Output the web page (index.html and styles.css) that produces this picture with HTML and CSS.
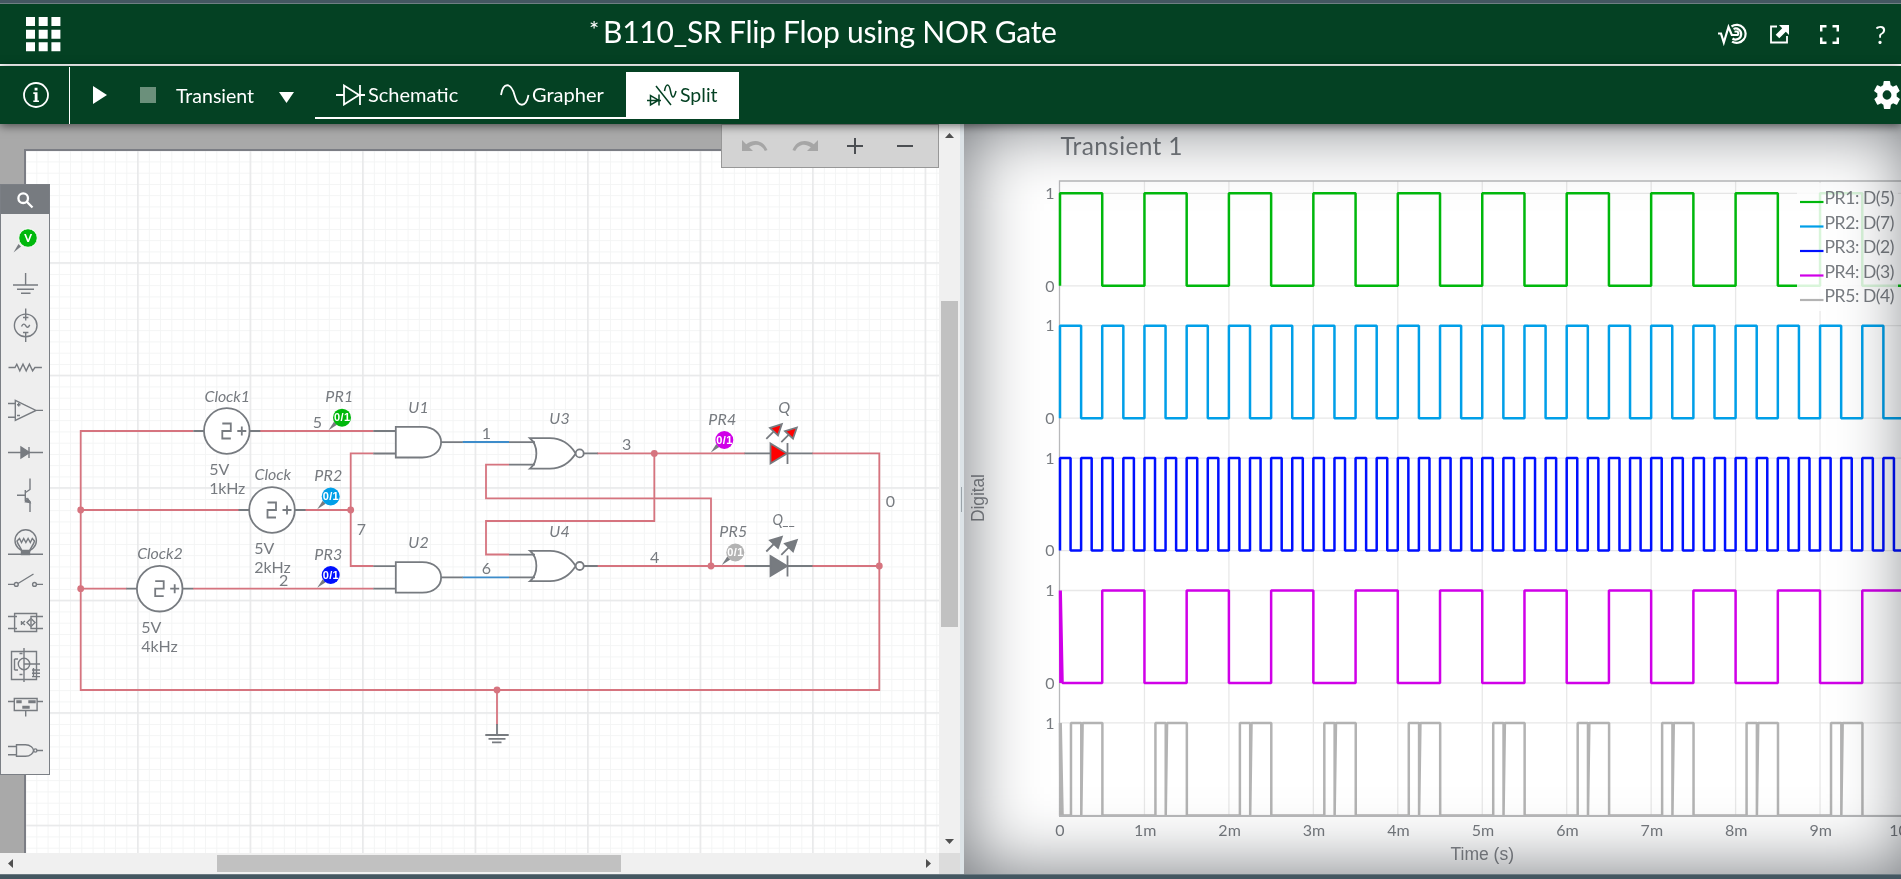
FILE: index.html
```html
<!DOCTYPE html>
<html lang="en">
<head>
<meta charset="utf-8">
<title>B110_SR Flip Flop using NOR Gate</title>
<link rel="stylesheet" href="styles.css">
</head>
<body>
<div class="app">
  <div class="strip top-strip"></div>
  <header class="header">
    <svg class="apps" width="35" height="35" viewBox="0 0 35 35"><path d="M0 0h9v9H0zM12.7 0h9v9h-9zM25.4 0h9v9h-9zM0 12.7h9v9H0zM12.7 12.7h9v9h-9zM25.4 12.7h9v9h-9zM0 25.2h9v9H0zM12.7 25.2h9v9h-9zM25.4 25.2h9v9h-9z"/></svg>
    <h1 class="title"><span class="dirty">*</span><span class="name">B110_SR Flip Flop using NOR Gate</span></h1>
    <nav class="actions">
      <svg width="30" height="24" viewBox="0 0 30 24" class="line"><path d="M1 11.500h3l2.800 9L11.500 5l3.300 8h5.700a2.200 2.200 0 0 0 0-3.500h-3"/><path d="M14.500 4.500A9 9 0 1 1 15 19.600"/><path d="M15.500 16.500a5.500 5.500 0 1 0 1-9.500"/></svg>
      <svg width="21" height="21" viewBox="0 0 21 21"><path d="M8 2.500H2v16h16V12" class="line thin"/><path d="M10 1h10v10l-3.200-3.200-6.500 6.500-3.600-3.600 6.500-6.500z"/></svg>
      <svg width="19" height="19" viewBox="0 0 19 19" class="bold"><path d="M1.200 6.500V1.200h5.300M12.500 1.200h5.300v5.300M17.800 12.500v5.300h-5.300M6.500 17.800H1.200v-5.300"/></svg>
      <span class="help">?</span>
    </nav>
  </header>
  <div class="toolbar">
    <div class="info"><svg width="28" height="28" viewBox="0 0 28 28"><circle cx="14" cy="14" r="12" class="line thin"/><path d="M12.600 6.800h2.900v2.700h-2.900zM11.300 11.300h4.200v8.200h1.500v1.600h-5.700v-1.600h1.400v-6.600h-1.400z"/></svg></div>
    <svg class="play" width="14" height="18" viewBox="0 0 14 18"><path d="M0 0l14 9-14 9z"/></svg>
    <span class="stop"></span>
    <span class="mode">Transient</span>
    <svg class="caret" width="15" height="11" viewBox="0 0 15 11"><path d="M0 0h15L7.500 11z"/></svg>
    <div class="tabs">
      <div class="tab schematic-tab"><svg width="30" height="22" viewBox="0 0 30 22" class="line thin"><path d="M0 11h8M8 1.500v19L23 11zM24 1v20M24 11h5"/></svg><span>Schematic</span></div>
      <div class="tab grapher-tab"><svg width="30" height="24" viewBox="0 0 30 24" class="line thin"><path d="M1 12C3-1 11-1 14.500 12S26 25 28.500 12"/></svg><span>Grapher</span></div>
      <div class="tab active"><svg width="31" height="24" viewBox="0 0 31 24" class="dark"><path d="M0 17.500h14M3.500 12.500v9.500l8-4.800zM12 11.500v11M9 3l15 19M17.500 8c1.500-8 4.500-8 6 0s3.500 8 5.500 0"/></svg><span>Split</span></div>
    </div>
    <svg class="gear" width="26" height="28" viewBox="2 2 20 20" preserveAspectRatio="none"><path d="M19.400 13a7.600 7.600 0 0 0 0-2l2.100-1.600a.5.5 0 0 0 .1-.7l-2-3.400a.5.500 0 0 0-.6-.2l-2.500 1a7.300 7.300 0 0 0-1.700-1l-.4-2.600a.5.5 0 0 0-.5-.5h-4a.5.5 0 0 0-.5.5l-.4 2.600a7.700 7.700 0 0 0-1.700 1l-2.500-1a.5.5 0 0 0-.6.200l-2 3.400a.5.5 0 0 0 .1.700L4.600 11a8 8 0 0 0 0 2l-2.100 1.600a.5.5 0 0 0-.1.700l2 3.400a.5.5 0 0 0 .6.200l2.500-1a7.300 7.300 0 0 0 1.700 1l.4 2.600a.5.5 0 0 0 .5.500h4a.5.5 0 0 0 .5-.5l.4-2.600a7.700 7.700 0 0 0 1.700-1l2.500 1a.5.5 0 0 0 .6-.2l2-3.400a.5.5 0 0 0-.1-.7zM12 15.400a3.400 3.400 0 1 1 0-6.800 3.400 3.400 0 0 1 0 6.800z" fill-rule="evenodd"/></svg>
  </div>

  <main class="workspace">
    <section class="editor">
      <div class="canvas">
        <svg class="sheet" width="939" height="729" viewBox="0 124 939 729">
          <defs>
            <pattern id="minor" x="25.100" y="150.200" width="11.250" height="11.250" patternUnits="userSpaceOnUse"><path d="M0 .5h11.250M.5 0v11.250" stroke="#f3f4f4" fill="none"/></pattern>
            <pattern id="major" x="24.600" y="149.700" width="112.500" height="112.500" patternUnits="userSpaceOnUse"><path d="M0 .75h112.500M.75 0v112.500" stroke="#e7e8e9" stroke-width="1.500" fill="none"/></pattern>
            <g id="and"><path d="M0-15.300h26.500C39-15.300 45.300-7.500 45.300 0S39 15.300 26.500 15.300H0z" class="body"/><path d="M-22.500-11.200H0M-22.500 11.300H0M45.300 0h21.700"/></g>
            <g id="nor"><path d="M0-15.200h20C31-15 40-9 45.700 0 40 9 31 15 20 15.200H0C8.500 8 8.500-8 0-15.200z" class="body"/><path d="M-21-11.300H5M-21 11.300H5M53.700 0h14"/><circle cx="49.700" cy="0" r="4" class="body"/></g>
            <g id="clock"><circle r="22.800" class="body"/><path d="M-33.500 0h10.700M22.800 0h10.700M-4.500-7.500H4V0h-8.500v7.500H4M10.500 0h9M15 -4.500v9"/></g>
            <g id="led"><path d="M-26 0H0M17 0h25M17-10.500v21"/><path d="M0-10L16.500 0 0 10z" class="fill"/><path d="M-4.200-14.500l8-8M10.800-11.200l8-8"/><path d="M11.300-29.200L-.5-25.600l8 7.600zM26.300-25.900L14.500-22.300l8 7.600z" class="fill"/></g>
            <g id="tail"><path d="M-13.500 12.500l5.500-8.500 3 3z"/></g>
          </defs>
          <rect x="0" y="124" width="939" height="729" fill="#a9a9a9"/>
          <rect x="25" y="150" width="930" height="720" fill="#fff"/>
          <rect x="25" y="150" width="930" height="720" fill="url(#minor)"/>
          <rect x="25" y="150" width="930" height="720" fill="url(#major)"/>
          <path d="M25 870V150h930" fill="none" stroke="#7b7d84" stroke-width="2"/>

          <g class="wire">
            <path d="M193.300 431H80.700V690H879.300V453.400H812M80.700 510H240M80.700 588.700h46M260 431h113.500M305 510h45.700M193 588.700h180.500M373.500 453.400h-22.800V566h22.800"/>
            <path d="M597 453.400h148M597 566h148M812 566h67.300M509 464.700h-23v33.700h225V566M654.300 453.400V521H486v33.500h23M497 690v35"/>
          </g>
          <path d="M462.500 442H509M462.500 577.400H509" class="bluewire"/>
          <g class="dot"><circle cx="80.700" cy="510" r="3.400"/><circle cx="80.700" cy="588.700" r="3.400"/><circle cx="350.700" cy="510" r="3.400"/><circle cx="654.300" cy="453.400" r="3.400"/><circle cx="711" cy="566" r="3.400"/><circle cx="879.300" cy="566" r="3.400"/><circle cx="497" cy="690" r="3.400"/></g>

          <g class="part">
            <use href="#clock" x="226.800" y="431"/><use href="#clock" x="272" y="510"/><use href="#clock" x="159.700" y="588.700"/>
            <use href="#and" x="395.800" y="442.200"/><use href="#and" x="395.800" y="577.400"/>
            <use href="#nor" x="530" y="453.400"/><use href="#nor" x="530" y="566"/>
            <use href="#led" x="770.500" y="453.400" class="lit"/><use href="#led" x="770.500" y="566" class="off"/>
            <path d="M497 724v11M485.300 735h23.400M488.500 738.800h17M492 742.400h9.500"/>
          </g>

          <g class="probe">
            <use href="#tail" x="342" y="417.700"/><circle cx="342" cy="417.700" r="9" fill="#00b80c"/>
            <use href="#tail" x="330.700" y="496.700"/><circle cx="330.700" cy="496.500" r="9" fill="#009fe8"/>
            <use href="#tail" x="330.700" y="575.200"/><circle cx="330.700" cy="575" r="9" fill="#0010ff"/>
            <use href="#tail" x="724.300" y="440"/><circle cx="724.300" cy="440" r="9" fill="#d000e8"/>
            <use href="#tail" x="735.300" y="552.500"/><circle cx="735.300" cy="552.500" r="9" fill="#b3b3b3"/>
            <text x="334" y="421.300" textLength="16">0/1</text><text x="322.700" y="500" textLength="16">0/1</text><text x="322.700" y="578.500" textLength="16">0/1</text><text x="716.300" y="443.500" textLength="16">0/1</text><text x="727.300" y="556" textLength="16">0/1</text>
          </g>

          <g class="label ref">
            <text x="204.500" y="402.300" textLength="45.500">Clock1</text><text x="254.500" y="480.300" textLength="36.500">Clock</text><text x="137.200" y="559.300" textLength="45.500">Clock2</text>
            <text x="325.200" y="402" textLength="28">PR1</text><text x="314.200" y="481" textLength="28">PR2</text><text x="314.200" y="560" textLength="28">PR3</text><text x="708.200" y="424.700" textLength="28">PR4</text><text x="719.200" y="537" textLength="28">PR5</text>
            <text x="408.200" y="413.300" textLength="20.500">U1</text><text x="408.200" y="548.300" textLength="20.500">U2</text><text x="549.200" y="424.300" textLength="20.500">U3</text><text x="549.200" y="537" textLength="20.500">U4</text>
            <text x="778.200" y="413.300">Q</text><text x="772.500" y="525.300" textLength="23" lengthAdjust="spacingAndGlyphs">Q__</text>
          </g>
          <g class="label">
            <text x="209.200" y="475">5V</text><text x="209.200" y="494.300" textLength="36">1kHz</text><text x="254.200" y="554">5V</text><text x="254.200" y="573.300" textLength="36.500">2kHz</text><text x="141.200" y="633">5V</text><text x="141.200" y="652.300" textLength="36.500">4kHz</text>
            <text x="312.700" y="428">5</text><text x="278.900" y="586">2</text><text x="356.700" y="534.700">7</text><text x="481.700" y="439.300">1</text><text x="481.700" y="574">6</text><text x="622" y="449.800">3</text><text x="650" y="563">4</text><text x="885.700" y="507">0</text>
          </g>
        </svg>
        <div class="history">
          <svg width="26" height="12" viewBox="0 0 26 12"><path d="M0 0v11h11L7.200 7.300C13 2.500 20 4.500 22.800 11l2.700-.9C22 .8 12.500-1.700 4.200 4.200z" fill="#a6a6a6"/></svg>
          <svg width="26" height="12" viewBox="0 0 26 12"><path d="M26 0v11H15l3.800-3.700C13 2.500 6 4.500 3.200 11L.5 10.100C4 .8 13.500-1.700 21.800 4.200z" fill="#a6a6a6"/></svg>
          <svg width="16" height="16" viewBox="0 0 16 16"><path d="M0 7h16v2H0zM7 0h2v16H7z" fill="#4b4e52"/></svg>
          <svg width="16" height="16" viewBox="0 0 16 16"><path d="M0 7h16v2H0z" fill="#4b4e52"/></svg>
        </div>
        <div class="toolbox">
          <div class="search"><svg width="17" height="17" viewBox="0 0 17 17"><circle cx="6.200" cy="6.200" r="4.800"/><path d="M9.800 9.800l5.700 5.700"/></svg></div>
          <svg class="palette" width="50" height="560" viewBox="0 214 50 560">
            <path d="M13.500 252.500l5-8.500 2.500 2.500z" class="solid tip"/><circle cx="28" cy="238" r="9.300" fill="#00b80c" stroke="#fff" stroke-width="1"/><text x="28" y="242">V</text>
            <path d="M25.600 273v12M13 285h25M17 289.300h17M21 293.300h9.500"/>
            <circle cx="25.700" cy="325.400" r="11.300"/><path d="M25.700 308.500v12M25.700 332.500v9.500M23 317.500h5.400M23 332.500h5.400M21.500 326.500c1.500-3 3-3 4.200-.8s2.700 2.200 4-.8"/>
            <path d="M8.500 367.500H15l1.800-3.300 3 6.600 3.200-6.600 3.200 6.600 3.200-6.600 3.200 6.600 2.300-3.300h7"/>
            <path d="M15.300 400.300v20.200L36 410.400zM8 403.500h7.300M8 417.200h7.300M36 410.400h7M17 404.800h3.500M18.700 403v3.500M17 415.500h3"/>
            <path d="M8 452.500h35M29 447v11"/><path d="M21 447v11l8.500-5.500z" class="solid"/>
            <path d="M30 478.500v11l-4.500 3M17 495.300h8.300M25.300 490v11M25.500 498l4.500 3.500V512"/><path d="M30 502.500l-4.500-.8 2.300-3z" class="solid"/>
            <circle cx="25.700" cy="540.500" r="10.700"/><path d="M8 554.300h35M22 552c0-4-4-6-5-11l2.500-2.500 2 4 2.200-4 2.200 4 2.200-4 2.200 4 2-4 2.200 2.500c-1 5-5 7-5 11"/><path d="M21.500 550.500h8v4h-8z" class="solid"/>
            <path d="M8 584.400h6.300M36.500 584.400H43M18 583.500l15.500-9.500"/><circle cx="16.300" cy="584.400" r="1.900"/><circle cx="34.500" cy="584.400" r="1.900"/>
            <path d="M14.600 613.500h22v18h-22zM8 616.500h9M8 628.500h9M43 616.500H31v3M43 628.500H31v-3M31 618.500l4 4-4 4-4-4zM21.500 621v4M25 621l-2.500 2 2.500 2M31 620v5"/>
            <path d="M11.500 651.500h25v28h-25zM24 648v34M24 664h16M14.500 659v11M14.500 659H18M14.500 670H18M19.500 653.500h3M19.500 674.500h3M32 670h8M32 673.300h8M32 676.600h8M33.500 668v9"/><circle cx="24" cy="664" r="5.700"/>
            <path d="M14.300 698.500h22.800v12H14.300zM8 701.500h6.300M37 701.500h6M25.700 710.500v6"/><path d="M17 701h4v1.500h-4zM29 701h6v1.500h-6zM23 706.500h6v1.500h-6z"/>
            <path d="M16.500 744.800h9c5 0 8 3.500 8 5.700s-3 5.700-8 5.700h-9zM8 746.500h8.500M8 754.700h8.500M37 750.500h6"/><circle cx="35.300" cy="750.500" r="1.600"/>
          </svg>
        </div>
      </div>
      <div class="vscroll"><svg class="up" width="9" height="5" viewBox="0 0 9 5"><path d="M0 5l4.500-5L9 5z"/></svg><div class="vtrack"><div class="vthumb"></div></div><svg width="9" height="5" viewBox="0 0 9 5"><path d="M0 0h9L4.500 5z"/></svg></div>
      <div class="hscroll"><svg width="5" height="9" viewBox="0 0 5 9"><path d="M5 0v9L0 4.500z"/></svg><div class="htrack"><div class="hthumb"></div></div><svg width="5" height="9" viewBox="0 0 5 9"><path d="M0 0v9l5-4.500z"/></svg></div>
      <div class="corner"></div>
    </section>
    <div class="divider"><span></span></div>
    <section class="grapher">
      <svg width="937" height="750" viewBox="964 124 937 750" id="chart">
        <text x="1060.500" y="155" class="chart-title" textLength="122">Transient 1</text>
        <g id="grid"></g>
        <path d="M1059.500 816V181H1901" class="frame"/>
        <g id="waves"></g>
        <path d="M1059 816H1901" class="frame bottom"/>
        <rect x="1797" y="183" width="101" height="128" fill="#fff" opacity=".85"/>
        <g id="legend"></g>
        <g id="ticks"></g>
        <text x="1450.500" y="860" class="axis" textLength="63.500">Time (s)</text>
        <text transform="translate(984 522) rotate(-90)" class="axis" textLength="48">Digital</text>
      </svg>
    </section>
  </main>
  <div class="strip bottom-strip"></div>
</div>
<script src="chart.js"></script>
</body>
</html>
```

FILE: styles.css
```css
* { box-sizing: border-box; }
body { margin: 0; font-family: Lato, "Liberation Sans", sans-serif; overflow: hidden; background: #fff; }
svg { display: block; flex: none; }
.app { width: 1901px; height: 879px; display: flex; flex-direction: column; overflow: hidden; }
.strip { flex: none; background: #445761; }
.top-strip { height: 4px; border-bottom: 1px solid #6e7f83; }
.bottom-strip { height: 5px; border-top: 1px solid #6b7a81; }

.header { flex: none; height: 62px; background: #044123; border-bottom: 2px solid #fff; display: flex; align-items: center; color: #fff; fill: #fff; padding: 0 12px 0 26px; }
.title { flex: 1; display: flex; margin: 0; padding: 0 0 7px 528px; font-weight: 400; font-size: 30px; line-height: 44px; white-space: nowrap; }
.dirty { width: 14px; font-size: 24px; line-height: 40px; }
.name { letter-spacing: -.27px; }
.actions { display: flex; align-items: center; gap: 0; }
.actions svg:nth-child(1) { margin-right: 22px; }
.actions svg:nth-child(2) { margin-right: 30px; }
.actions svg:nth-child(3) { margin-right: 36px; }
.help { width: 14px; font-size: 25px; line-height: 30px; }
.line { fill: none; stroke: #fff; stroke-width: 2.2; }
.thin { stroke-width: 1.8; }
.bold { fill: none; stroke: #fff; stroke-width: 2.5; }
.dark { fill: none; stroke: #044123; stroke-width: 1.5; }

.toolbar { flex: none; height: 58px; background: #044123; color: #fff; fill: #fff; display: flex; align-items: center; font-size: 19.500px; position: relative; z-index: 3; box-shadow: 0 2px 9px rgba(0,0,0,.55); }
.info { width: 70px; height: 57px; margin-top: 1px; padding: 0 0 1px 22px; border-right: 1px solid #fff; display: flex; align-items: center; }
.play { margin-left: 23px; }
.stop { width: 16px; height: 16px; margin-left: 33px; background: #6b907b; }
.mode { width: 82px; margin: 1px 0 0 20px; white-space: nowrap; }
.caret { margin: 5px 0 0 21px; }
.tabs { height: 47px; margin: 1px auto 0 21px; display: flex; }
.tab { display: flex; align-items: center; border-bottom: 2px solid #fff; }
.tab span { margin-top: -1px; }
.schematic-tab { width: 165px; padding-left: 21px; gap: 2px; }
.grapher-tab { width: 146px; padding-left: 20px; gap: 2px; }
.schematic-tab span, .grapher-tab span { font-size: 20px; }
.active { width: 113px; padding-left: 21px; gap: 2px; background: #fff; color: #044123; }
.gear { margin-right: 1px; }

.workspace { flex: none; height: 750px; display: flex; }
.editor { width: 960px; display: grid; grid-template: 729px 21px / 939px 21px; flex: none; }
.canvas { position: relative; overflow: hidden; }
.body { fill: #fff; }
.wire { fill: none; stroke: #d6747f; stroke-width: 1.8; }
.bluewire { fill: none; stroke: #3d8cca; stroke-width: 1.9; }
.dot { fill: #d6747f; }
.part { fill: none; stroke: #777b80; stroke-width: 1.8; }
.lit { fill: #f00; }
.off { fill: #777b80; }
.probe { fill: #777b80; }
.probe text { fill: #fff; font: 700 11px "Liberation Sans", sans-serif; }
.label { fill: #777b80; font-size: 16px; }
.ref { font-style: italic; }

.history { position: absolute; left: 721px; top: 0; width: 218px; height: 44px; border: 1px solid #979797; background: #d3d3d3; display: flex; align-items: center; padding-left: 20px; }
.history svg:nth-child(2) { margin-left: 24px; }
.history svg:nth-child(3) { margin-left: 29px; }
.history svg:nth-child(4) { margin-left: 34px; }
.toolbox { position: absolute; left: 0; top: 60px; width: 50px; height: 591px; background: #eee; outline: 1px solid #7b7f85; outline-offset: -1px; }
.search { height: 30px; background: #777b80; display: flex; align-items: center; padding: 2px 0 0 17px; }
.search svg { fill: none; stroke: #fff; stroke-width: 2.3; }
.palette { fill: none; stroke: #777b80; stroke-width: 1.4; }
.solid { fill: #777b80; }
.tip { stroke: none; }
.palette text { fill: #fff; stroke: none; font: 900 11px Lato, sans-serif; text-anchor: middle; }

.vscroll { background: #f0f0f0; fill: #505050; display: flex; flex-direction: column; align-items: center; padding: 9px 0 9px 0; }
.vtrack { flex: 1; width: 17px; padding-top: 163px; }
.vthumb { height: 326px; background: #c1c1c1; }
.hscroll { background: #f0f0f0; fill: #505050; display: flex; align-items: center; padding: 0 8px; }
.htrack { flex: 1; padding-left: 204px; }
.hthumb { width: 404px; height: 17px; background: #c1c1c1; }
.corner { background: #dcdcdc; }
.divider { width: 4px; flex: none; background: #dce3e7; display: flex; align-items: center; padding-left: 1px; }
.divider span { width: 1px; height: 25px; background: #9aa3a9; }
.grapher { flex: 1; position: relative; overflow: hidden; background: #fff; }
.grapher::after { content: ""; position: absolute; inset: 0 -12px 0 0; box-shadow: inset 0 0 72px #6e7277; mix-blend-mode: multiply; }
.frame { fill: none; stroke: #b8b9bb; stroke-width: 1.300; }
.bottom { stroke-width: 1.800; }
.chart-title { font-size: 24.500px; fill: #777b80; }
.axis { font: 17.500px "Liberation Sans", sans-serif; fill: #84878c; }
#grid path { stroke: #e8e8e8; stroke-width: 1.300; fill: none; }
#waves path { fill: none; stroke-width: 2.500; }
#legend path { stroke-width: 2.200; }
#legend text { font-size: 17.500px; fill: #777b80; }
#ticks text { font-size: 16px; fill: #777b80; }
```

FILE: chart.js
```js
const NS = "http://www.w3.org/2000/svg";
const x0 = 1060, ms = 84.45, top0 = 193.3, pitch = 132.4, swing = 92.5;

function add(parent, tag, attrs, text) {
  const el = document.createElementNS(NS, tag);
  for (const key in attrs) el.setAttribute(key, attrs[key]);
  if (text !== undefined) el.textContent = text;
  document.getElementById(parent).appendChild(el);
}

// Each trace is a list of [time in ms, logic level] corners.
function clock(period) {
  const pts = [[0, 0]];
  for (let t = 0; t < 10; t += period) {
    pts.push([t, 1], [t + period / 2, 1], [t + period / 2, 0], [t + period, 0]);
  }
  return pts;
}
function q() {
  const pts = [[0, 1], [0.005, 0], [0.008, 1], [0.03, 0]];
  for (let t = 0; t < 10; t++) pts.push([t + 0.5, 0], [t + 0.5, 1], [t + 1, 1], [t + 1, 0]);
  return pts;
}
function qBar() {
  const pts = [[0, 1], [0.005, 0], [0.008, 1], [0.03, 0]];
  for (let t = 0; t < 10; t++) {
    pts.push([t + 0.13, 0], [t + 0.13, 1], [t + 0.252, 1], [t + 0.252, 0], [t + 0.268, 1], [t + 0.502, 1], [t + 0.502, 0]);
  }
  return pts;
}

const traces = [
  { name: "PR1: D(5)", color: "#00b80c", points: clock(1) },
  { name: "PR2: D(7)", color: "#009fe8", points: clock(0.5) },
  { name: "PR3: D(2)", color: "#0010ff", points: clock(0.25) },
  { name: "PR4: D(3)", color: "#d000e8", points: q() },
  { name: "PR5: D(4)", color: "#b3b3b3", points: qBar() }
];

for (let i = 1; i < 10; i++) add("grid", "path", { d: `M${x0 + i * ms} 181V816` });

traces.forEach((trace, i) => {
  const high = top0 + pitch * i, low = high + swing;
  add("grid", "path", { d: `M1060 ${high}H1901M1060 ${low}H1901` });
  const d = trace.points.map(([t, v]) => `${(x0 + t * ms).toFixed(2)} ${(v ? high : low).toFixed(2)}`).join("L");
  add("waves", "path", { d: "M" + d, stroke: trace.color, "stroke-linejoin": "bevel" });
  add("ticks", "text", { x: 1045.3, y: high + 5.7 }, "1");
  if (i < 4) add("ticks", "text", { x: 1045.3, y: low + 5.7 }, "0");
  const base = 204 + i * 24.5;
  add("legend", "path", { d: `M1800 ${base - 2}H1823.500`, stroke: trace.color });
  add("legend", "text", { x: 1824.5, y: base, textLength: 70 }, trace.name);
});

for (let i = 0; i <= 10; i++) {
  add("ticks", "text", { x: x0 + i * ms + (i ? 0.7 : 0), y: 836, "text-anchor": "middle" }, i ? i + "m" : "0");
}
```
